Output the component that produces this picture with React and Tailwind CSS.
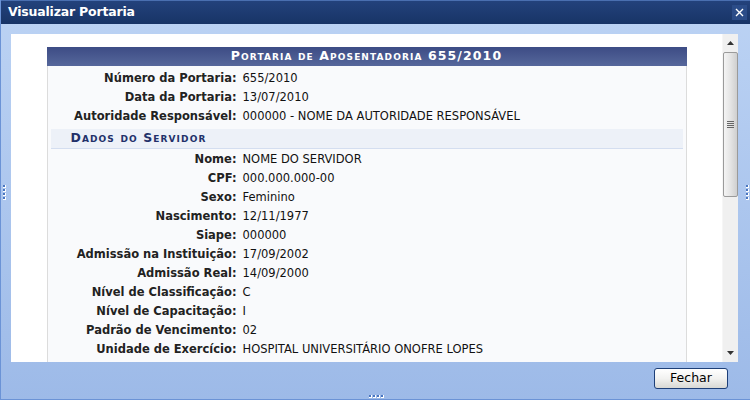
import React from "react";

const rows1 = [
  ["Número da Portaria:", "655/2010"],
  ["Data da Portaria:", "13/07/2010"],
  ["Autoridade Responsável:", "000000 - NOME DA AUTORIDADE RESPONSÁVEL"],
];
const rows2 = [
  ["Nome:", "NOME DO SERVIDOR"],
  ["CPF:", "000.000.000-00"],
  ["Sexo:", "Feminino"],
  ["Nascimento:", "12/11/1977"],
  ["Siape:", "000000"],
  ["Admissão na Instituição:", "17/09/2002"],
  ["Admissão Real:", "14/09/2000"],
  ["Nível de Classificação:", "C"],
  ["Nível de Capacitação:", "I"],
  ["Padrão de Vencimento:", "02"],
  ["Unidade de Exercício:", "HOSPITAL UNIVERSITÁRIO ONOFRE LOPES"],
];

function Row({ l, v }) {
  return (
    <div className="flex h-[19px] items-center">
      <div className="w-[186px] shrink-0 text-right font-bold text-[#222]">{l}</div>
      <div className="pl-[6px] text-[#111]">{v}</div>
    </div>
  );
}

function Dots({ vertical }) {
  const arr = [0, 1, 2, 3];
  return (
    <div className={vertical ? "flex flex-col gap-[1px]" : "flex gap-[1px]"}>
      {arr.map((i) => (
        <div key={i} className="h-[3px] w-[3px] bg-[#4a76c0] border-r border-b border-white" />
      ))}
    </div>
  );
}

export default function App() {
  return (
    <div
      className="relative w-[750px] h-[400px] overflow-hidden flex flex-col bg-gradient-to-b from-[#bcd3f4] to-[#9dbae8] border-l border-b border-[#6b93d6] text-[11.5px]"
      style={{ fontFamily: '"DejaVu Sans", Verdana, sans-serif' }}
    >
      {/* title bar */}
      <div className="h-[24px] shrink-0 flex items-center justify-between bg-gradient-to-b from-[#23427c] to-[#183466] border-t border-[#4a6fb0] pl-[7px] pr-[3px]">
        <span className="text-white font-bold text-[12.5px] tracking-[-0.2px]">Visualizar Portaria</span>
        <div className="w-[15px] h-[15px] bg-[#2b4c88] flex items-center justify-center">
          <svg width="9" height="9" viewBox="0 0 9 9">
            <path d="M1 1L8 8M8 1L1 8" stroke="#fff" strokeWidth="1.4" />
          </svg>
        </div>
      </div>

      {/* frame */}
      <div className="flex-1 flex flex-col pl-[10px] pr-[12px] pt-[10px]">
        <div className="h-[328px] flex bg-white">
          {/* content */}
          <div className="flex-1 pt-[13px] flex justify-center">
            <div className="w-[640px] h-[315px] flex flex-col">
              <div className="h-[19px] shrink-0 bg-gradient-to-b from-[#3d4c85] to-[#56679b] flex items-center justify-center text-white font-bold text-[12.5px] tracking-[1.1px] [font-variant:small-caps]">
                Portaria de Aposentadoria 655/2010
              </div>
              <div className="flex-1 bg-[#f9fafc] border-l border-r border-[#dcdcdc] px-[3px] pt-[3px]">
                {rows1.map(([l, v]) => (
                  <Row key={l} l={l} v={v} />
                ))}
                <div className="mt-[3px] h-[20px] bg-[#edf1f8] border-b border-[#d4def0] flex items-center pl-[20px] font-bold text-[#22306a] text-[12.5px] tracking-[1.1px] [font-variant:small-caps]">
                  Dados do Servidor
                </div>
                <div className="mt-[1px]">
                  {rows2.map(([l, v]) => (
                    <Row key={l} l={l} v={v} />
                  ))}
                </div>
              </div>
            </div>
          </div>
          {/* scrollbar */}
          <div className="w-[16px] shrink-0 bg-[#f0f0f0] flex flex-col items-center border-l border-[#f6f6f6]">
            <div className="h-[18px] flex items-center justify-center">
              <svg width="7" height="4" viewBox="0 0 7 4"><path d="M0 4L3.5 0L7 4Z" fill="#333" /></svg>
            </div>
            <div className="w-[15px] h-[145px] rounded-[2px] border border-[#9a9a9a] bg-gradient-to-r from-[#f4f4f4] via-[#e4e4e4] to-[#cfcfcf] flex items-center justify-center">
              <div className="flex flex-col gap-[1px]">
                <div className="w-[7px] h-[1px] bg-[#666]" />
                <div className="w-[7px] h-[1px] bg-[#666]" />
                <div className="w-[7px] h-[1px] bg-[#666]" />
                <div className="w-[7px] h-[1px] bg-[#666]" />
              </div>
            </div>
            <div className="flex-1" />
            <div className="h-[18px] flex items-center justify-center">
              <svg width="7" height="4" viewBox="0 0 7 4"><path d="M0 0L3.5 4L7 0Z" fill="#333" /></svg>
            </div>
          </div>
        </div>
        {/* bottom */}
        <div className="flex-1 flex justify-end items-start pt-[6px] pr-[10px]">
          <button
            className="w-[74px] h-[21px] rounded-[3px] border border-[#1d3f78] bg-gradient-to-b from-[#ffffff] via-[#f2f2f0] to-[#d8d8d4] text-[12.5px] text-black flex items-center justify-center"
            style={{ fontFamily: 'Tahoma, "DejaVu Sans", sans-serif' }}
          >
            Fechar
          </button>
        </div>
      </div>

      {/* grips */}
      <div className="absolute left-[2px] top-[185px]"><Dots vertical /></div>
      <div className="absolute right-[1px] top-[185px]"><Dots vertical /></div>
      <div className="absolute left-[368px] bottom-[1px]"><Dots /></div>
    </div>
  );
}
